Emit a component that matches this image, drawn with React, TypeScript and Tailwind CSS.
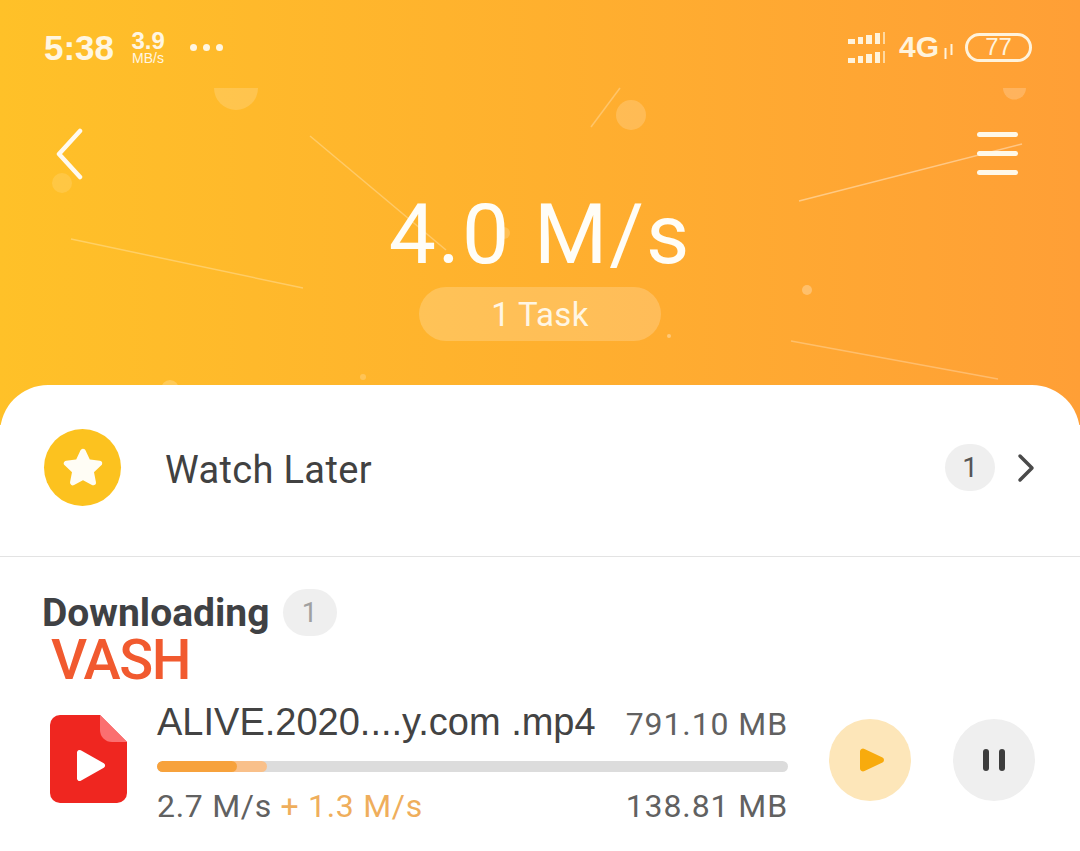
import React from "react";

function HeaderDecor() {
  return (
    <svg className="absolute inset-0 w-full h-full pointer-events-none" viewBox="0 0 1080 425" fill="none">
      <g fill="#fff">
        <path d="M214 88h44a22 22 0 0 1-44 0z" opacity=".17" />
        <path d="M1003 88h23a11.500 11.500 0 0 1-23 0z" opacity=".2" />
        <circle cx="631" cy="115" r="15" opacity=".18" />
        <circle cx="62" cy="183" r="10" opacity=".13" />
        <circle cx="807" cy="290" r="5" opacity=".28" />
        <circle cx="669" cy="336" r="2" opacity=".35" />
        <circle cx="363" cy="377" r="3" opacity=".2" />
        <circle cx="170" cy="389" r="9" opacity=".22" />
        <circle cx="504" cy="233" r="6" opacity=".18" />
      </g>
      <g stroke="#fff" strokeWidth="1.500" strokeOpacity=".28">
        <line x1="310" y1="136" x2="446" y2="250" />
        <line x1="71" y1="239" x2="303" y2="288" />
        <line x1="591" y1="127" x2="620" y2="88" />
        <line x1="799" y1="201" x2="1022" y2="144" strokeOpacity=".4" />
        <line x1="791" y1="341" x2="998" y2="379" />
      </g>
    </svg>
  );
}

function SignalRow() {
  return (
    <div className="flex items-end gap-[3px]">
      <span className="w-[7px] h-[5px] bg-[#fff3dc]" />
      <span className="w-[5px] h-[7px] bg-[#fff3dc]" />
      <span className="w-[6px] h-[9px] bg-[#fff3dc]" />
      <span className="w-[5px] h-[11px] bg-[#fff3dc]" />
      <span className="w-[2px] h-[12px] bg-[#ffd9a0]" />
    </div>
  );
}

export default function App() {
  return (
    <div className="w-[1080px] h-[851px] overflow-hidden bg-white font-['Roboto',sans-serif]">
      <header className="relative h-[425px] bg-gradient-to-r from-[#ffc128] via-[#ffb02e] to-[#ff9f36] text-white">
        <HeaderDecor />
        <div className="relative flex items-center justify-between h-[94px] pl-[44px] pr-[48px]">
          <div className="flex items-center text-[#fff6e2]">
            <span className="text-[35px] font-bold leading-none font-['Liberation_Sans',sans-serif]">5:38</span>
            <div className="ml-[15px] flex flex-col items-center w-[38px] font-['Liberation_Sans',sans-serif]">
              <span className="text-[24px] leading-[21px] font-bold">3.9</span>
              <span className="text-[14px] leading-[14px]">MB/s</span>
            </div>
            <div className="ml-[23px] flex gap-[6px]">
              <span className="w-[7px] h-[7px] rounded-full bg-[#fff6e2]" />
              <span className="w-[7px] h-[7px] rounded-full bg-[#fff6e2]" />
              <span className="w-[7px] h-[7px] rounded-full bg-[#fff6e2]" />
            </div>
          </div>
          <div className="flex items-center text-[#fff3dc]">
            <div className="flex flex-col gap-[7px]">
              <SignalRow />
              <SignalRow />
            </div>
            <span className="ml-[14px] text-[30px] font-bold leading-none font-['Liberation_Sans',sans-serif]">4G</span>
            <svg className="ml-[3px] mt-[8px]" width="13" height="16" viewBox="0 0 13 16" fill="none" stroke="#fff3dc" strokeWidth="2">
              <path d="M3.500 5v11M9.500 1v11" />
            </svg>
            <div className="ml-[10px] w-[67px] h-[29px] rounded-full border-[3px] border-[#fff3dc] flex items-center justify-center text-[24px] font-medium leading-none font-['Liberation_Sans',sans-serif]">
              77
            </div>
          </div>
        </div>
        <div className="relative flex items-center justify-between pl-[54px] pr-[62px] h-[120px]">
          <svg width="30" height="52" viewBox="0 0 30 52" fill="none" stroke="#fffaf0" strokeWidth="4.500" strokeLinecap="round" strokeLinejoin="round" className="-mt-[1px]">
            <path d="M26 3 5 26l21 23" />
          </svg>
          <div className="flex flex-col gap-[14px] -mt-[1px]">
            <span className="block w-[41px] h-[5px] rounded-full bg-[#fff8e8]" />
            <span className="block w-[41px] h-[5px] rounded-full bg-[#fff8e8]" />
            <span className="block w-[41px] h-[5px] rounded-full bg-[#fff8e8]" />
          </div>
        </div>
        <div className="relative flex flex-col items-center -mt-[25px]">
          <div className="text-[84px] leading-[92px] tracking-[2px] font-normal text-[#fffdf7]">4.0 M/s</div>
          <div className="mt-[6px] w-[242px] h-[54px] rounded-full bg-[#ffffff]/20 flex items-center justify-center text-[33px] pt-[2px] tracking-[0.300px] text-[#fff6e4]">
            1 Task
          </div>
        </div>
      </header>

      <main className="relative -mt-[40px] bg-white rounded-t-[48px]">
        <section className="h-[172px] border-b border-[#e3e3e3] flex items-center pl-[44px] pr-[45px]">
          <div className="w-[77px] h-[77px] rounded-full bg-[#fcc21f] flex items-center justify-center -mt-[7px]">
            <svg width="44" height="42" viewBox="0 0 24 23" fill="#fffdf5" stroke="#fffdf5" strokeWidth="3" strokeLinejoin="round">
              <path d="m12 3 2.700 5.700 6.300.8-4.600 4.300 1.200 6.200L12 17l-5.600 3 1.200-6.200L3 9.500l6.300-.8z" />
            </svg>
          </div>
          <span className="ml-[44px] text-[38px] leading-none tracking-[0.350px] text-[#414141] -mt-[2px]">Watch Later</span>
          <div className="ml-auto w-[50px] h-[47px] rounded-full bg-[#efefef] flex items-center justify-center text-[28px] text-[#555] -mt-[6px]">
            1
          </div>
          <svg className="ml-[22px] -mt-[6px]" width="18" height="30" viewBox="0 0 18 30" fill="none" stroke="#4a4a4a" strokeWidth="3.500" strokeLinecap="round" strokeLinejoin="round">
            <path d="m3 3 12 12L3 27" />
          </svg>
        </section>

        <section>
          <div className="flex items-center pl-[42px] pt-[32px]">
            <span className="text-[39px] leading-[48px] font-bold text-[#3f4144]">Downloading</span>
            <div className="ml-[13px] -mt-[1px] w-[54px] h-[47px] rounded-full bg-[#efefef] flex items-center justify-center text-[28px] text-[#a0a0a0]">
              1
            </div>
          </div>
          <div className="pl-[51px] -mt-[4px] text-[56px] leading-[54px] font-medium text-[#f15a2f] tracking-[-1.500px]">
            VASH
          </div>
          <div className="flex items-center pl-[50px] pr-[45px] mt-[12px]">
            <svg width="77" height="88" viewBox="0 0 77 88" className="shrink-0 -mt-[10px]">
              <path d="M10 0h40l27 27v51a10 10 0 0 1-10 10H10A10 10 0 0 1 0 78V10A10 10 0 0 1 10 0z" fill="#ef2620" />
              <path d="M50 0l27 27H62a12 12 0 0 1-12-12z" fill="#fb6f70" />
              <path d="M27 37.500a2.500 2.500 0 0 1 3.800-2.200l23 13a2.500 2.500 0 0 1 0 4.400l-23 13a2.500 2.500 0 0 1-3.800-2.200z" fill="#fff" />
            </svg>
            <div className="ml-[30px] w-[631px] shrink-0">
              <div className="flex items-baseline justify-between h-[46px]">
                <span className="text-[38px] leading-[46px] text-[#434343] font-['Liberation_Sans',sans-serif]">ALIVE.2020....y.com .mp4</span>
                <span className="text-[32px] leading-[46px] text-[#616161] tracking-[0.900px]">791.10 MB</span>
              </div>
              <div className="relative mt-[16px] h-[11px] rounded-full bg-[#dcdcdc] overflow-hidden">
                <div className="absolute left-0 top-0 h-full w-[110px] rounded-full bg-[#f9c08a]" />
                <div className="absolute left-0 top-0 h-full w-[80px] rounded-full bg-[#f7a23c]" />
              </div>
              <div className="flex items-baseline justify-between mt-[11px] h-[46px] text-[32px] leading-[46px]">
                <span className="tracking-[0.700px]">
                  <span className="text-[#616161]">2.7 M/s </span>
                  <span className="text-[#efae5c]">+ 1.3 M/s</span>
                </span>
                <span className="text-[#616161] tracking-[0.900px]">138.81 MB</span>
              </div>
            </div>
            <div className="ml-auto flex gap-[42px] -mt-[9px]">
              <div className="w-[82px] h-[82px] rounded-full bg-[#fde6b9] flex items-center justify-center">
                <svg width="26" height="24" viewBox="0 0 26 24" fill="#f8ab0d" className="ml-[3px]">
                  <path d="M1 3.500a3 3 0 0 1 4.500-2.600l18 8.500a3 3 0 0 1 0 5.200l-18 8.500A3 3 0 0 1 1 20.500z" />
                </svg>
              </div>
              <div className="w-[82px] h-[82px] rounded-full bg-[#efefef] flex items-center justify-center gap-[10px]">
                <span className="w-[6px] h-[22px] rounded-full bg-[#3d3d3d]" />
                <span className="w-[6px] h-[22px] rounded-full bg-[#3d3d3d]" />
              </div>
            </div>
          </div>
        </section>
      </main>
    </div>
  );
}
